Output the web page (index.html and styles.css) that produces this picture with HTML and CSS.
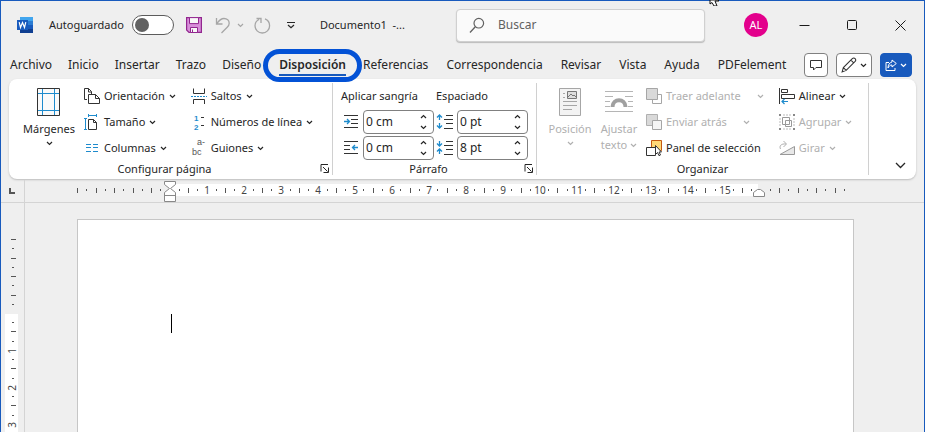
FILE: index.html
```html
<!DOCTYPE html>
<html lang="es">
<head>
<meta charset="utf-8">
<title>Documento1 - Word</title>
<link rel="stylesheet" href="styles.css">
</head>
<body>
<svg class="defs" aria-hidden="true">
  <symbol id="chev" viewBox="0 0 7 5"><path d="M1 1l2.500 2.500L6 1" fill="none" stroke="currentColor" stroke-width="1.200"/></symbol>
  <symbol id="launch" viewBox="0 0 9 9"><path d="M1 7.500V.5H8M3 3l4.500 4.500M8.500 3.500V8.500H3.500" fill="none" stroke="currentColor"/></symbol>
  <symbol id="upchev" viewBox="0 0 7 5"><path d="M1 4l2.500-2.500L6 4" fill="none" stroke="currentColor" stroke-width="1.200"/></symbol>
</svg>
<div class="window">
  <header class="titlebar">
    <svg class="word" width="17" height="16" viewBox="0 0 17 16" aria-hidden="true">
      <path d="M3 0h13v4H3z" fill="#41a5ee"/><path d="M3 4h13v4H3z" fill="#2b7cd3"/><path d="M3 8h13v4H3z" fill="#185abd"/><path d="M3 12h13v4H3z" fill="#103f91"/>
      <path d="M0 3h11v10H0z" fill="#185abd"/><path d="M2.200 5.200l1.300 5.300 2-5 2 5 1.300-5.300" fill="none" stroke="#fff" stroke-width="1.200"/>
    </svg>
    <label class="auto-label" for="autosave">Autoguardado</label>
    <input class="toggle" id="autosave" type="checkbox">
    <button class="plain save" aria-label="Guardar"><svg width="16" height="16" viewBox="0 0 16 16"><path d="M.6.600h14.800v14.800H3l-2.400-2.400z" fill="#d88fda" stroke="#92278f" stroke-width="1.200"/><path d="M3.500.6h9v6h-9zM4.500 10.500h7v5h-7z" fill="#f8f8f8" stroke="#92278f"/><path d="M6.500 12.500v3" stroke="#92278f"/></svg></button>
    <button class="plain undo" aria-label="Deshacer"><svg width="16" height="17" viewBox="0 0 16 17"><path d="M1.500 1v6h6M1.800 6.700C4 3.500 6 1.500 9 1.500c3 0 5.200 2 5.200 4.800 0 1.700-.8 2.800-2 4L6.500 16" fill="none" stroke="#a6a6a6" stroke-width="1.300"/></svg><svg class="chev" aria-hidden="true"><use href="#chev"/></svg></button>
    <button class="plain redo" aria-label="Rehacer"><svg width="17" height="17" viewBox="0 0 17 17"><path d="M2.500 1.500H7v4.500M5 2.500C2.500 3.800 1 6 1 8.700 1 12.700 4.200 16 8.300 16s7.300-3.300 7.300-7.300c0-3.200-1.900-5.700-4.600-6.800" fill="none" stroke="#a6a6a6" stroke-width="1.300"/></svg></button>
    <button class="plain more" aria-label="Personalizar barra"><svg width="8" height="8" viewBox="0 0 8 8"><path d="M0 1.500h8M1 4l3 2.800L7 4" fill="none" stroke="#262626" stroke-width="1.200"/></svg></button>
    <span class="docname">Documento1 &nbsp;-...</span>
    <label class="search">
      <svg width="16" height="17" viewBox="0 0 16 17" aria-hidden="true"><circle cx="9.800" cy="6.200" r="4.800" fill="none" stroke="#616161" stroke-width="1.200"/><path d="M6.300 9.700L1 15.500" stroke="#616161" stroke-width="1.300"/></svg>
      <input type="search" placeholder="Buscar" aria-label="Buscar">
    </label>
    <span class="avatar">AL</span>
    <div class="winbtns">
      <button class="plain" aria-label="Minimizar"><svg width="11" height="11" viewBox="0 0 11 11"><path d="M.5 5.500h10" stroke="#1a1a1a"/></svg></button>
      <button class="plain" aria-label="Maximizar"><svg width="11" height="11" viewBox="0 0 11 11"><rect x=".5" y=".5" width="9" height="9" rx="1" fill="none" stroke="#1a1a1a"/></svg></button>
      <button class="plain" aria-label="Cerrar"><svg width="11" height="11" viewBox="0 0 11 11"><path d="M.5.500l10 10M10.500.500l-10 10" stroke="#1a1a1a"/></svg></button>
    </div>
  </header>

  <nav class="tabs">
    <a href="#">Archivo</a><a href="#">Inicio</a><a href="#">Insertar</a><a href="#">Trazo</a><a href="#">Diseño</a><a href="#" class="active" aria-current="page">Disposición</a><a href="#">Referencias</a><a href="#">Correspondencia</a><a href="#">Revisar</a><a href="#">Vista</a><a href="#">Ayuda</a><a href="#">PDFelement</a>
    <div class="actions">
      <button aria-label="Comentarios"><svg width="12" height="12" viewBox="0 0 12 12"><path d="M.5 1.500h11v7H6L3.500 11V8.500h-3z" fill="none" stroke="#333"/></svg></button>
      <button aria-label="Edición"><svg width="16" height="16" viewBox="0 0 17 17"><path d="M1.200 15.800l1.300-4.600L12 1.700c1-1 2.200-.9 3 0s.9 2 0 3L5.500 14.200zM10.500 3.200l3 3M2.500 11.200l3 3" fill="none" stroke="#333" stroke-width="1.100"/></svg><svg class="chev" aria-hidden="true"><use href="#chev"/></svg></button>
      <button class="share" aria-label="Compartir"><svg width="12" height="13" viewBox="0 0 12 13"><path d="M4 3.500H1v8h9V9M7 1l4.300 3.500L7 8V6C5 6 4 7 3 9c0-3 1.500-5.500 4-6z" fill="none" stroke="#fff"/></svg><svg class="chev" aria-hidden="true"><use href="#chev"/></svg></button>
    </div>
  </nav>

  <main class="ribbon">
    <section class="group setup" aria-label="Configurar página">
      <div class="body">
        <button class="big"><svg width="24" height="29" viewBox="0 0 24 29"><path d="M.5.500h22v27H.5z" fill="#fafafa" stroke="#333"/><path d="M5.500 1v26M17.500 1v26M1 5.500h21M1 22.500h21" stroke="#1e8bcd"/></svg><span>Márgenes</span><svg class="chev" aria-hidden="true"><use href="#chev"/></svg></button>
        <div class="stack">
          <button class="cmd"><svg width="17" height="17" viewBox="0 0 17 17"><path d="M3 11.500H.5V.5h4l3 3v3M4.500.5v3.500h3M4.500 6.500h7l4 4v5h-11zM11.500 6.500v4h4" fill="none" stroke="#333"/></svg><span>Orientación</span><svg class="chev" aria-hidden="true"><use href="#chev"/></svg></button>
          <button class="cmd"><svg width="17" height="17" viewBox="0 0 17 17"><path d="M4.500 5.500h5l3 3v7h-8zM9.500 5.500v3h3" fill="none" stroke="#333"/><path d="M1.500 5v11M0 4.500h3M0 15.500h3M4 1.500h9M4.500 0v3M12.500 0v3" fill="none" stroke="#1e8bcd"/></svg><span>Tamaño</span><svg class="chev" aria-hidden="true"><use href="#chev"/></svg></button>
          <button class="cmd"><svg width="17" height="17" viewBox="0 0 17 17"><path d="M2 4.500h5M2 7.500h5M2 11.500h5M9 4.500h5M9 7.500h5M9 11.500h5" stroke="#1e8bcd"/></svg><span>Columnas</span><svg class="chev" aria-hidden="true"><use href="#chev"/></svg></button>
        </div>
        <div class="stack second">
          <button class="cmd"><svg width="17" height="17" viewBox="0 0 17 17"><path d="M2.500.5v5h11v-5M2.500 16v-4.500h11V16" fill="none" stroke="#333"/><path d="M0 8.500h16" stroke="#1e8bcd" stroke-dasharray="2 1"/></svg><span>Saltos</span><svg class="chev" aria-hidden="true"><use href="#chev"/></svg></button>
          <button class="cmd"><svg width="17" height="17" viewBox="0 0 17 17"><text x="3" y="7" class="glyph blue">1</text><text x="3" y="16" class="glyph blue">2</text><path d="M10 3.500h3M10 11.500h3" stroke="#333"/></svg><span>Números de línea</span><svg class="chev" aria-hidden="true"><use href="#chev"/></svg></button>
          <button class="cmd"><svg width="17" height="17" viewBox="0 0 17 17"><text x="6" y="5" class="glyph letters">a-</text><text x="1" y="15" class="glyph letters">bc</text></svg><span>Guiones</span><svg class="chev" aria-hidden="true"><use href="#chev"/></svg></button>
        </div>
      </div>
      <footer class="with-launcher">Configurar página<button class="plain launcher" aria-label="Abrir configurar página"><svg width="9" height="9"><use href="#launch"/></svg></button></footer>
    </section>

    <section class="group para" aria-label="Párrafo">
      <div class="body">
        <div class="stack">
          <span class="heading">Aplicar sangría</span>
          <div class="field"><svg width="16" height="14" viewBox="0 0 16 14" aria-hidden="true"><path d="M1 .5h14M8 4.500h7M8 8.500h7M1 12.500h14" stroke="#333"/><path d="M1 6.500h5M4 4l2.500 2.500L4 9" fill="none" stroke="#1e8bcd" stroke-width="1.300"/></svg><div class="spin"><input value="0 cm" aria-label="Sangría izquierda"><span><svg class="chev"><use href="#upchev"/></svg><svg class="chev"><use href="#chev"/></svg></span></div></div>
          <div class="field"><svg width="16" height="14" viewBox="0 0 16 14" aria-hidden="true"><path d="M1 .5h14M1 4.500h6M1 8.500h6M1 12.500h14" stroke="#333"/><path d="M15 6.500h-5M12 4L9.500 6.500 12 9" fill="none" stroke="#1e8bcd" stroke-width="1.300"/></svg><div class="spin"><input value="0 cm" aria-label="Sangría derecha"><span><svg class="chev"><use href="#upchev"/></svg><svg class="chev"><use href="#chev"/></svg></span></div></div>
        </div>
        <div class="stack">
          <span class="heading">Espaciado</span>
          <div class="field"><svg width="18" height="16" viewBox="0 0 18 16" aria-hidden="true"><path d="M10 1.500h7M8 5.500h9M10 9.500h7M8 14.500h9" stroke="#333"/><path d="M3.500 1v5M1 3.500L3.500 1 6 3.500M3.500 9v5M1 11.500L3.500 14 6 11.500" fill="none" stroke="#1e8bcd" stroke-width="1.300"/></svg><div class="spin"><input value="0 pt" aria-label="Espaciado antes"><span><svg class="chev"><use href="#upchev"/></svg><svg class="chev"><use href="#chev"/></svg></span></div></div>
          <div class="field"><svg width="18" height="16" viewBox="0 0 18 16" aria-hidden="true"><path d="M10 1.500h7M8 5.500h9M10 9.500h7M8 14.500h9" stroke="#333"/><path d="M3.500 1v5M1 3.500L3.500 6 6 3.500M3.500 9v5M1 11.500L3.500 9 6 11.500" fill="none" stroke="#1e8bcd" stroke-width="1.300"/></svg><div class="spin"><input value="8 pt" aria-label="Espaciado después"><span><svg class="chev"><use href="#upchev"/></svg><svg class="chev"><use href="#chev"/></svg></span></div></div>
        </div>
      </div>
      <footer class="with-launcher">Párrafo<button class="plain launcher" aria-label="Abrir párrafo"><svg width="9" height="9"><use href="#launch"/></svg></button></footer>
    </section>

    <section class="group arrange" aria-label="Organizar">
      <div class="body">
        <button class="big" disabled><svg width="24" height="29" viewBox="0 0 24 29"><path d="M1.500.5h21v27h-21z" fill="#f3f3f3" stroke="#a6a6a6"/><path d="M9.500 3.500h9v7h-9z" fill="#ddd" stroke="#777"/><path d="M10 9l3-3 2 2 1-1 2 2" fill="none" stroke="#777"/><path d="M5 5.500h2M5 9.500h2M5 13.500h14M5 17.500h14M5 21.500h9" stroke="#a6a6a6"/></svg><span>Posición</span><svg class="chev" aria-hidden="true"><use href="#chev"/></svg></button>
        <button class="big wrap" disabled><svg width="30" height="29" viewBox="0 0 30 29"><path d="M1 3.500h28M1 8.500h8M21 8.500h8M1 13.500h5M24 13.500h5M1 18.500h5M24 18.500h5M1 23.500h28" stroke="#b5b5b5"/><path d="M8.500 19c0-9 13-9 13 0" fill="none" stroke="#a0a0a0" stroke-width="4"/></svg><span>Ajustar<br>texto <svg class="chev" aria-hidden="true"><use href="#chev"/></svg></span></button>
        <div class="stack">
          <button class="cmd split" disabled><svg width="17" height="17" viewBox="0 0 17 17"><path d="M6.500 6.500h9v9h-9z" fill="#fff" stroke="#a6a6a6"/><path d="M.5.500h11v11H.5z" fill="#d9d9d9" stroke="#a6a6a6"/></svg><span>Traer adelante</span><svg class="chev" aria-hidden="true"><use href="#chev"/></svg></button>
          <button class="cmd split" disabled><svg width="17" height="17" viewBox="0 0 17 17"><path d="M.5.500h11v11H.5z" fill="#d9d9d9" stroke="#b0b0b0"/><path d="M6.500 6.500h9v9h-9z" fill="#f5f5f5" stroke="#a6a6a6"/></svg><span>Enviar atrás</span><svg class="chev" aria-hidden="true"><use href="#chev"/></svg></button>
          <button class="cmd"><svg width="17" height="17" viewBox="0 0 17 17"><path d="M5.500.5h10v10h-10z" fill="#ffd978" stroke="#c55a11"/><path d="M.5 7.500h9v8H.5z" fill="#fff" stroke="#333"/><path d="M9.500 5.500v9l2-2 1.500 3.200 1.500-.7-1.500-3h2.500z" fill="#fff" stroke="#333"/></svg><span>Panel de selección</span></button>
        </div>
        <div class="stack last">
          <button class="cmd"><svg width="17" height="17" viewBox="0 0 17 17"><path d="M.5 0v16M2.500 1.500h6v3h-6zM2.500 6.500h13v4h-13z" fill="none" stroke="#333"/><path d="M3 13.500h6M5.500 11L3 13.500 5.500 16" fill="none" stroke="#1e8bcd" stroke-width="1.200"/></svg><span>Alinear</span><svg class="chev" aria-hidden="true"><use href="#chev"/></svg></button>
          <button class="cmd" disabled><svg width="17" height="17" viewBox="0 0 17 17"><path d="M3.500 3.500h7v7h-7zM6.500 6.500h6v6h-6z" fill="none" stroke="#999"/><path d="M0 1h2M14 1h2M0 15h2M14 15h2" stroke="#888" stroke-width="2"/><path d="M1 4v9M15 4v9M4 1h9M4 15h9" stroke="#bbb" stroke-dasharray="2 1"/></svg><span>Agrupar</span><svg class="chev" aria-hidden="true"><use href="#chev"/></svg></button>
          <button class="cmd" disabled><svg width="17" height="17" viewBox="0 0 17 17"><path d="M1 14.500h14.500v-8z" fill="#e8e8e8" stroke="#999"/><path d="M1.500 9C0 6 2 3.500 7 4M4.500 1L7.500 4 4.500 7" fill="none" stroke="#b0b0b0"/></svg><span>Girar</span><svg class="chev" aria-hidden="true"><use href="#chev"/></svg></button>
        </div>
      </div>
      <footer>Organizar</footer>
    </section>
    <button class="plain collapse" aria-label="Contraer cinta"><svg width="11" height="7" viewBox="0 0 11 7"><path d="M1 1l4.500 4.500L10 1" fill="none" stroke="#262626" stroke-width="1.300"/></svg></button>
  </main>

  <div class="workspace">
    <div class="corner"><svg width="6" height="6" viewBox="0 0 6 6" aria-hidden="true"><path d="M1 0v5h5" fill="none" stroke="#555" stroke-width="2"/></svg></div>
    <div class="hruler"><svg id="hruler" width="777" height="22" viewBox="0 0 777 22" aria-label="Regla horizontal"></svg></div>
    <div class="vruler"><svg id="vruler" width="23" height="229" viewBox="0 0 23 229" aria-label="Regla vertical"></svg></div>
    <div class="canvas"><article class="page"><span class="caret"></span></article></div>
  </div>
</div>
<svg class="pointer" width="12" height="6" viewBox="0 0 12 6" aria-hidden="true"><path d="M1 0v4l2-1.500L5 6h3L6 1h4L9 0z" fill="#fff" stroke="#111"/></svg>
<script src="rulers.js"></script>
</body>
</html>
```
FILE: styles.css
```css
* { box-sizing: border-box; }
body { margin: 0; background: #efefef; color: #262626; font: 12px/16px "Noto Sans", "Open Sans", sans-serif; }
button, input { font: inherit; color: inherit; }
button { padding: 0; background: none; border: 0; }
svg { flex: none; display: block; }
.defs { position: absolute; width: 0; height: 0; }
.window { height: 100vh; display: flex; flex-direction: column; overflow: hidden; border: 1px solid #185abd; border-bottom: 0; }
.chev { width: 7px; height: 5px; }
.plain { display: flex; align-items: center; }

.titlebar { display: flex; align-items: center; height: 48px; padding: 0 18px 0 16px; flex: none; }
.auto-label { margin-left: 15px; font-size: 11px; }
.toggle { appearance: none; flex: none; width: 42px; height: 20px; margin: 0 0 0 8px; border: 1px solid #5c5c5c; border-radius: 10px; background: #fff; padding: 2px; }
.toggle::before { content: ""; display: block; width: 14px; height: 14px; border-radius: 50%; background: #616161; }
.save { margin-left: 12px; }
.undo { margin-left: 13px; gap: 6px; color: #a6a6a6; }
.redo { margin-left: 10px; }
.more { margin-left: 16px; }
.docname { margin-left: 25px; font-size: 11px; }
.search { display: flex; align-items: center; gap: 13px; width: 249px; height: 33px; margin-left: auto; padding: 0 12px; background: #fafafa; border: 1px solid #d0d0d0; border-radius: 4px; box-shadow: 0 1px 1px #bbb; }
.search input { flex: 1; min-width: 0; border: 0; background: none; padding: 0; outline: 0; }
.search input::placeholder { color: #616161; opacity: 1; }
.avatar { flex: none; width: 24px; height: 24px; margin-left: 39px; border-radius: 50%; background: #e3008c; color: #fff; font-size: 11px; line-height: 24px; text-align: center; }
.winbtns { display: flex; gap: 37px; margin-left: 31px; }

.tabs { display: flex; align-items: center; height: 30px; flex: none; padding: 2px 12px 0 1px; }
.tabs a { position: relative; padding: 0 8px; color: inherit; text-decoration: none; white-space: nowrap; }
.tabs .active { margin-left: 2px; font-weight: 600; }
.tabs .active ~ a { padding: 0 9px; }
.active::before { content: ""; position: absolute; inset: -8px -8px -9px; border: 5px solid #0352d6; border-radius: 17px; }
.active::after { content: ""; position: absolute; inset: auto 8px -3px; height: 2px; background: #185abd; }
.actions { display: flex; gap: 8px; margin-left: auto; }
.actions button { display: flex; align-items: center; justify-content: center; gap: 3px; min-width: 24px; height: 24px; padding: 0 4px; border: 1px solid #808080; border-radius: 4px; background: #fff; }
.actions .share { background: #185abd; border-color: #185abd; color: #fff; }

.ribbon { display: flex; height: 100px; flex: none; margin: 0 8px 1px; padding: 4px 8px 4px 0; background: #fff; border-radius: 8px; box-shadow: 0 1px 2px #bbb; }
.group { display: flex; flex-direction: column; border-right: 1px solid #d0d0d0; white-space: nowrap; font-size: 11px; }
.setup { flex: 0 0 324px; }
.para { flex: 0 0 204px; }
.arrange { flex: 0 0 332px; }
.body { display: flex; flex: 1; }
.setup .body { padding-left: 14px; }
.para .body { padding-left: 8px; }
.arrange .body { padding-left: 10px; }
.group footer { position: relative; height: 12px; line-height: 12px; text-align: center; }
.with-launcher { padding-right: 12px; }
.launcher { position: absolute; right: 3px; top: 1px; }
.big { display: flex; flex-direction: column; align-items: center; padding-top: 5px; width: 52px; gap: 4px; }
.stack { display: grid; grid-template-rows: repeat(3, 26px); align-items: center; margin-left: 9px; height: 78px; }
.setup .second { margin-left: 15px; }
.cmd { display: flex; align-items: center; gap: 3px; }
.cmd .chev { margin-left: 1px; }
.split .chev { margin-left: 13px; }
button:disabled { color: #b0b0b0; }
.cmd svg { overflow: visible; }
.glyph { font-family: "Liberation Sans", sans-serif; font-size: 8px; fill: #333; }
.blue { fill: #1e8bcd; font-weight: 700; }
.letters { font-size: 9px; fill: #555; }
.para .stack { margin-left: 0; }
.para .stack + .stack { margin-left: 2px; }
.field { display: flex; align-items: center; gap: 4px; padding-left: 2px; }
.para .stack + .stack .field { gap: 3px; padding-left: 0; }
.spin { display: flex; align-items: center; width: 71px; height: 24px; padding: 0 6px 0 2px; border: 1px solid #808080; border-radius: 4px; background: #fff; font-size: 12px; }
.spin input { flex: 1; min-width: 0; padding: 0; border: 0; outline: 0; background: none; }
.spin span { display: grid; gap: 6px; }
.arrange .big { width: 46px; }
.arrange .wrap { margin-left: 3px; }
.wrap .chev { display: inline-block; vertical-align: 1px; }
.arrange .stack { margin-left: 4px; }
.arrange .last { margin-left: 15px; }
.collapse { align-self: flex-end; margin-left: auto; padding: 0 2px 6px 0; }

.workspace { flex: 1; min-height: 0; display: grid; grid-template: 23px 1fr / 24px 1fr; }
.corner, .vruler { border-right: 1px solid #d4d4d4; }
.corner, .hruler { border-bottom: 1px solid #d4d4d4; }
.corner { padding: 8px; }
.hruler, .canvas { display: flex; justify-content: center; padding-right: 18px; min-width: 0; }
.vruler { overflow: hidden; }
.canvas { padding-top: 16px; overflow: hidden; }
.page { width: 777px; flex: none; border: 1px solid #c6c6c6; border-bottom: 0; background: #fff; padding: 94px 93px 0; }
.caret { display: block; width: 1px; height: 19px; background: #000; }
.num { font-size: 10px; fill: #444; text-anchor: middle; }
.pointer { position: absolute; left: 709px; top: 0; }
```
FILE: rulers.js
```js
// Draws quarter-centimetre marks: numbers on whole centimetres inside the margins, ticks on halves.
const CM = 36.95;

function marks(from, to, zero, limit, draw) {
  let out = "";
  for (let q = from; q <= to; q++) {
    if (q === 0 || q === limit * 4) continue;
    const pos = Math.round(zero + q * CM / 4);
    const numbered = q > 0 && q < limit * 4 && q % 4 === 0;
    out += draw(pos, numbered ? q / 4 : 0, q % 2 === 0);
  }
  return out;
}

const box = (x, y, w, h, c) => `<rect x="${x}" y="${y}" width="${w}" height="${h}" fill="${c}"/>`;

document.getElementById("hruler").innerHTML =
  box(93, 4, 588, 12, "#fff") +
  marks(-10, 73, 92.5, 16, (p, n, tick) => n
    ? `<text class="num" x="${p + 1}" y="14">${n}</text>`
    : tick ? box(p, 8, 1, 5, "#555") : box(p, 9, 1, 2, "#555")) +
  `<path d="M87.500 1.500h11v3l-5 4 5 4v9h-11v-9l5-4-5-4zM87.500 15.500h11" fill="#fff" stroke="#888"/>
   <path d="M676.500 16.500v-4l4-3h3l4 3v4z" fill="#fff" stroke="#888"/>`;

document.getElementById("vruler").innerHTML =
  box(4, 111, 13, 118, "#fff") +
  marks(-8, 12, 110, 20, (p, n, tick) => n
    ? `<text class="num" transform="translate(15 ${p + 1}) rotate(-90)">${n}</text>`
    : tick ? box(10, p, 5, 1, "#555") : box(11, p, 2, 1, "#555"));
```
